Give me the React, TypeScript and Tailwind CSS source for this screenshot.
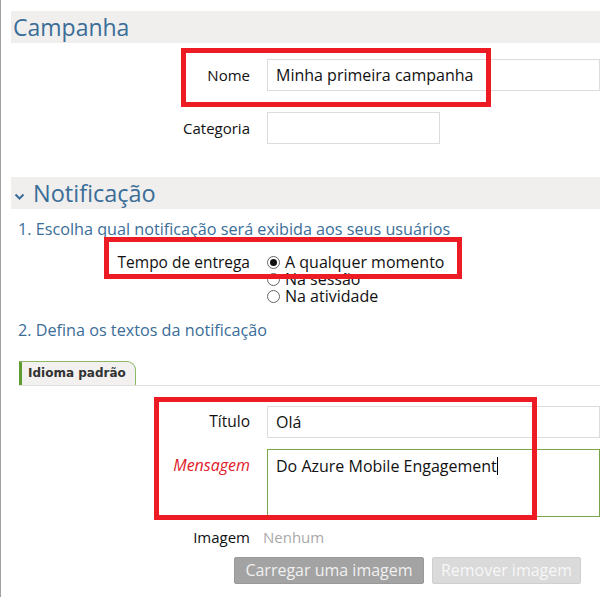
import React from "react";

const font = "font-['Open_Sans','Noto_Sans',sans-serif]";

function Radio({ checked }: { checked?: boolean }) {
  return (
    <span className="w-[13px] h-[13px] rounded-full border border-[#666] bg-white flex items-center justify-center shrink-0">
      {checked && <span className="w-[7px] h-[7px] rounded-full bg-[#111]" />}
    </span>
  );
}

export default function App() {
  return (
    <div className={`relative w-[600px] h-[597px] overflow-hidden bg-white border-l border-[#a0a0a0] text-[#111] ${font}`}>
      {/* Campanha header */}
      <div className="pt-[11px] pl-[10px]">
        <div className="h-[32px] bg-[#f0efed] pl-[2px] text-[23px] leading-[32px] text-[#3a6d98]">Campanha</div>
      </div>

      {/* Nome */}
      <div className="mt-[16px] flex items-center">
        <div className="w-[249px] text-right text-[15px]">Nome</div>
        <div className="ml-[17px] flex-1 h-[32px] border border-[#dcdcdc] pl-[8px] text-[16px] leading-[30px]">
          Minha primeira campanha
        </div>
      </div>

      {/* Categoria */}
      <div className="mt-[21px] flex items-center">
        <div className="w-[249px] text-right text-[15px]">Categoria</div>
        <div className="ml-[17px] w-[173px] h-[32px] border border-[#dcdcdc]" />
      </div>

      {/* Notificação header */}
      <div className="mt-[33px] pl-[10px]">
        <div className="h-[32px] bg-[#f0efed] flex items-center">
          <svg width="11" height="7" viewBox="0 0 11 7" className="ml-[3px] mt-[7px]">
            <path d="M1.5 1.5 L5.5 5.5 L9.5 1.5" fill="none" stroke="#3a6d98" strokeWidth="2" />
          </svg>
          <span className="ml-[8px] text-[23.5px] leading-[32px] text-[#3a6d98]">Notificação</span>
        </div>
      </div>

      {/* Step 1 */}
      <div className="mt-[10px] pl-[17px] text-[16.2px] leading-[20px] text-[#3a6d98]">
        1. Escolha qual notificação será exibida aos seus usuários
      </div>

      {/* Tempo de entrega */}
      <div className="mt-[15px] flex items-start">
        <div className="w-[249px] text-right text-[15.5px] leading-[17px]">Tempo de entrega</div>
        <div className="ml-[17px] flex flex-col text-[16px] leading-[17px]">
          <div className="flex items-center gap-[5px]"><Radio checked /><span>A qualquer momento</span></div>
          <div className="flex items-center gap-[5px]"><Radio /><span>Na sessão</span></div>
          <div className="flex items-center gap-[5px]"><Radio /><span>Na atividade</span></div>
        </div>
      </div>

      {/* Step 2 */}
      <div className="mt-[15px] pl-[17px] text-[16.2px] leading-[20px] text-[#3a6d98]">
        2. Defina os textos da notificação
      </div>

      {/* Tab */}
      <div className="mt-[21px] ml-[18px] flex border-b border-[#e0e0e0]">
        <div className="h-[24px] w-[117px] bg-[#f2f1ef] border-l-[3px] border-l-[#5e9c2f] border-t border-r border-t-[#8ab864] border-r-[#8ab864] rounded-tr-[9px] pl-[6px] font-['DejaVu_Sans',sans-serif] font-bold text-[12px] leading-[23px] text-[#333]">
          Idioma padrão
        </div>
      </div>

      {/* Título */}
      <div className="mt-[20px] flex items-center">
        <div className="w-[249px] text-right text-[15.5px]">Título</div>
        <div className="ml-[17px] flex-1 h-[32px] border border-[#dcdcdc] pl-[8px] text-[16px] leading-[30px]">
          Olá
        </div>
      </div>

      {/* Mensagem */}
      <div className="mt-[11px] flex items-start">
        <div className="w-[249px] pt-[4px] text-right text-[16px] italic text-[#e0202a]">Mensagem</div>
        <div className="ml-[17px] flex-1 h-[68px] border border-[#7aa64a] pl-[8px] pt-[4px] text-[16px] leading-[24px]">
          Do Azure Mobile Engagement<span className="inline-block w-[1px] h-[18px] bg-black align-[-3px]" />
        </div>
      </div>

      {/* Imagem */}
      <div className="mt-[10px] flex items-center leading-[20px]">
        <div className="w-[249px] text-right text-[15px]">Imagem</div>
        <div className="ml-[13px] text-[15px] text-[#aaaaaa]">Nenhum</div>
      </div>

      {/* Buttons */}
      <div className="mt-[10px] ml-[233px] flex gap-[8px]">
        <div className="h-[27px] w-[190px] rounded-[2px] bg-[#a3a3a3] border border-[#999] text-center text-[16px] leading-[25px] text-[#f0f0f0]">
          Carregar uma imagem
        </div>
        <div className="h-[27px] w-[149px] rounded-[2px] bg-[#dadada] border border-[#cfcfcf] text-center text-[16px] leading-[25px] text-[#f7f7f7]">
          Remover imagem
        </div>
      </div>

      {/* Red annotation boxes */}
      <div className="absolute left-[180px] top-[48px] w-[310px] h-[59px] border-[5px] border-[#ed1c24]" />
      <div className="absolute left-[103px] top-[237px] w-[358px] h-[42px] border-[5px] border-[#ed1c24]" />
      <div className="absolute left-[153px] top-[397px] w-[383px] h-[123px] border-[5px] border-[#ed1c24]" />
    </div>
  );
}
